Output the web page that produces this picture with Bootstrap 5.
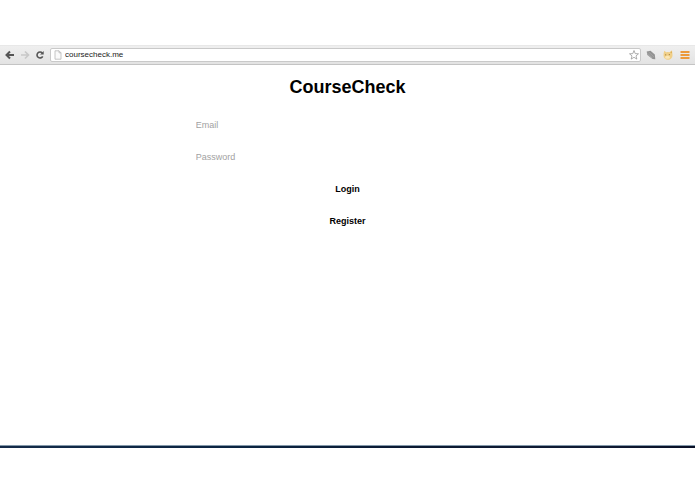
<!DOCTYPE html>
<html lang="en">
<head>
<meta charset="utf-8">
<meta name="viewport" content="width=device-width, initial-scale=1">
<title>CourseCheck</title>
<link href="https://cdn.jsdelivr.net/npm/bootstrap@5.3.0/dist/css/bootstrap.min.css" rel="stylesheet">
<style>
  body { font-family: "Liberation Sans", Arial, sans-serif; padding: 45px 0 46px; background: #fff; color: #000; }
  .toolbar { height: 20px; padding: 0 5px; gap: 5px; background: linear-gradient(#efefef, #e3e3e3); border-top: 1px solid #e8e8e8; border-bottom: 1px solid #c4c4c4; }
  .tool { width: 10px; height: 12px; }
  .tool svg { display: block; }
  .extensions { gap: 7px; }
  .address { height: 14px; border: 1px solid #c9c9c9; border-radius: 2px; background: #fff; padding: 0 1px 0 3px; }
  .address input { font-size: 8px; line-height: 12px; height: 12px; margin-left: 3px; outline: 0; color: #222; min-width: 0; }
  .page-area { padding-top: 10px; }
  .page-area h1 { font-size: 18px; line-height: 24px; }
  .login-form { width: 46%; gap: 8px; margin-top: 14px; }
  .login-form .form-control, .login-form .btn { font-size: 9px; line-height: 12px; height: 24px; padding: 6px 8px; color: #000; }
  .login-form .form-control::placeholder { color: #a2a2a2; }
  .desktop-edge { height: 3px; background: linear-gradient(90deg, #142b49, #0b2441 35%, #0b1932 60%, #101b34 85%, #080f26); border-top: 1px solid #8499aa; }
</style>
</head>
<body class="min-vh-100 d-flex flex-column">
<header class="toolbar d-flex align-items-center flex-shrink-0">
  <button type="button" class="tool btn p-0 border-0" aria-label="Back">
    <svg width="10" height="12" viewBox="0 0 10 12" fill="none" stroke="#555" stroke-width="2"><path d="M9 6H2M5 2.500L1.500 6L5 9.500"/></svg>
  </button>
  <button type="button" class="tool btn p-0 border-0" aria-label="Forward">
    <svg width="10" height="12" viewBox="0 0 10 12" fill="none" stroke="#c8c8c8" stroke-width="1.700"><path d="M1 6H8M5 2.500L8.500 6L5 9.500"/></svg>
  </button>
  <button type="button" class="tool btn p-0 border-0" aria-label="Reload">
    <svg width="10" height="12" viewBox="0 0 10 12"><path d="M7.300 4A3 3 0 1 0 7.700 7.300" fill="none" stroke="#555" stroke-width="1.600"/><path d="M8.700 2V5.600H5.100Z" fill="#555"/></svg>
  </button>
  <div class="address d-flex align-items-center flex-grow-1">
    <svg class="flex-shrink-0" width="8" height="10" viewBox="0 0 8 10" fill="#fafafa" stroke="#b8b8b8" stroke-width=".8"><path d="M1 .8H5L7 2.800V9.200H1ZM5 .8V2.800H7"/></svg>
    <input type="text" class="border-0 p-0 flex-grow-1 bg-transparent" value="coursecheck.me" aria-label="Address" spellcheck="false">
    <button type="button" class="tool btn p-0 border-0" aria-label="Bookmark this page">
      <svg width="10" height="12" viewBox="0 0 10 12" fill="#fff" stroke="#999" stroke-width=".8"><path d="M5 1.500L6.200 4.600L9.500 4.800L7 6.900L7.800 10.100L5 8.300L2.200 10.100L3 6.900L.5 4.800L3.800 4.600Z"/></svg>
    </button>
  </div>
  <div class="extensions d-flex">
    <button type="button" class="tool btn p-0 border-0" aria-label="Pages extension">
      <svg width="10" height="12" viewBox="0 0 10 12"><path d="M.7 2.500L4.500 1.700L8.800 5.500L9.300 10.300L6.500 9.900L1.300 6Z" fill="#929292"/><path d="M1 3.800L6.500 8.900M2.600 2.900L8 8.100M1.300 5.400L6 9" stroke="#b4b4b4" stroke-width=".5"/></svg>
    </button>
    <button type="button" class="tool btn p-0 border-0" aria-label="Cat extension">
      <svg width="10" height="12" viewBox="0 0 10 12"><path d="M1.300 1.800L3.200 3.300Q5 2.900 6.500 3.300L9 1.300L9.500 6C9.600 9 7.500 10.800 5 10.800S.5 9 .5 6.500Q.5 4 1.300 1.800Z" fill="#f0cf88"/><path d="M7.200 3.300L8.700 2.200L8.900 4.600Z" fill="#d9a950"/><ellipse cx="4.500" cy="8.200" rx="2.500" ry="1.500" fill="#fae6b8"/><circle cx="2.700" cy="5.800" r=".6" fill="#9a7838"/><circle cx="6.300" cy="5.600" r=".6" fill="#9a7838"/></svg>
    </button>
    <button type="button" class="tool btn p-0 border-0" aria-label="Menu">
      <svg width="10" height="12" viewBox="0 0 10 12" fill="#ec9a3c"><path d="M.5 2H9.500V4H.5ZM.5 5H9.500V7H.5ZM.5 8H9.500V10H.5Z"/></svg>
    </button>
  </div>
</header>
<main class="page-area flex-grow-1">
  <h1 class="fw-bold text-center m-0">CourseCheck</h1>
  <form class="login-form d-flex flex-column mx-auto">
    <input type="email" class="form-control border-0 bg-transparent" placeholder="Email" aria-label="Email">
    <input type="password" class="form-control border-0 bg-transparent" placeholder="Password" aria-label="Password">
    <button type="submit" class="btn border-0 fw-bold">Login</button>
    <button type="button" class="btn border-0 fw-bold">Register</button>
  </form>
</main>
<div class="desktop-edge flex-shrink-0"></div>
<script src="https://cdn.jsdelivr.net/npm/bootstrap@5.3.0/dist/js/bootstrap.bundle.min.js"></script>
</body>
</html>
